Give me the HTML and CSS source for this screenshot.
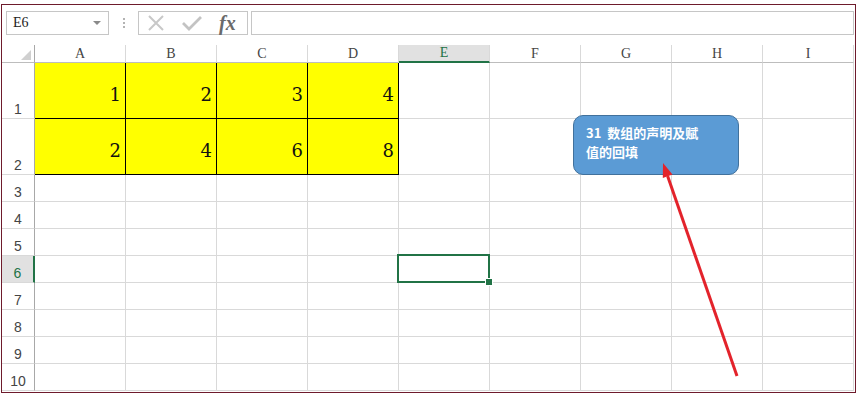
FILE: index.html
```html
<!DOCTYPE html>
<html lang="zh">

<head>
    <meta charset="UTF-8">
    <title>数组的声明及赋值的回填</title>
    <link rel="stylesheet" href="styles.css">
</head>

<body>
    <div class="window">
        <div class="formula-bar">
            <div class="name-box">
                <span>E6</span>
                <span class="caret"></span>
            </div>
            <div class="grip">
                <span></span><span></span><span></span>
            </div>
            <div class="fx-box">
                <svg class="icon-cancel" width="18" height="18" viewBox="0 0 18 18">
                    <path d="M2 2 L16 16 M16 2 L2 16" stroke="#c8c8c8" stroke-width="2" fill="none" />
                </svg>
                <svg class="icon-enter" width="20" height="16" viewBox="0 0 20 16">
                    <path d="M1 8 L7 14 L19 2" stroke="#c3c3c3" stroke-width="2.8" fill="none" />
                </svg>
                <span class="fx">fx</span>
            </div>
            <div class="formula-input"></div>
        </div>

        <div class="sheet">
            <!-- column headers -->
            <div class="hd corner"></div>
            <div class="hd">A</div>
            <div class="hd">B</div>
            <div class="hd">C</div>
            <div class="hd">D</div>
            <div class="hd active">E</div>
            <div class="hd">F</div>
            <div class="hd">G</div>
            <div class="hd">H</div>
            <div class="hd">I</div>

            <!-- row 1 -->
            <div class="rh">1</div>
            <div class="c y">1</div>
            <div class="c y">2</div>
            <div class="c y">3</div>
            <div class="c y">4</div>
            <div class="c"></div>
            <div class="c"></div>
            <div class="c"></div>
            <div class="c"></div>
            <div class="c"></div>

            <!-- row 2 -->
            <div class="rh">2</div>
            <div class="c y">2</div>
            <div class="c y">4</div>
            <div class="c y">6</div>
            <div class="c y">8</div>
            <div class="c"></div>
            <div class="c"></div>
            <div class="c"></div>
            <div class="c"></div>
            <div class="c"></div>

            <!-- row 3 -->
            <div class="rh">3</div>
            <div class="c"></div><div class="c"></div><div class="c"></div>
            <div class="c"></div><div class="c"></div><div class="c"></div>
            <div class="c"></div><div class="c"></div><div class="c"></div>

            <!-- row 4 -->
            <div class="rh">4</div>
            <div class="c"></div><div class="c"></div><div class="c"></div>
            <div class="c"></div><div class="c"></div><div class="c"></div>
            <div class="c"></div><div class="c"></div><div class="c"></div>

            <!-- row 5 -->
            <div class="rh">5</div>
            <div class="c"></div><div class="c"></div><div class="c"></div>
            <div class="c"></div><div class="c"></div><div class="c"></div>
            <div class="c"></div><div class="c"></div><div class="c"></div>

            <!-- row 6 -->
            <div class="rh active">6</div>
            <div class="c"></div><div class="c"></div><div class="c"></div>
            <div class="c"></div><div class="c sel"></div><div class="c"></div>
            <div class="c"></div><div class="c"></div><div class="c"></div>

            <!-- row 7 -->
            <div class="rh">7</div>
            <div class="c"></div><div class="c"></div><div class="c"></div>
            <div class="c"></div><div class="c"></div><div class="c"></div>
            <div class="c"></div><div class="c"></div><div class="c"></div>

            <!-- row 8 -->
            <div class="rh">8</div>
            <div class="c"></div><div class="c"></div><div class="c"></div>
            <div class="c"></div><div class="c"></div><div class="c"></div>
            <div class="c"></div><div class="c"></div><div class="c"></div>

            <!-- row 9 -->
            <div class="rh">9</div>
            <div class="c"></div><div class="c"></div><div class="c"></div>
            <div class="c"></div><div class="c"></div><div class="c"></div>
            <div class="c"></div><div class="c"></div><div class="c"></div>

            <!-- row 10 -->
            <div class="rh">10</div>
            <div class="c"></div><div class="c"></div><div class="c"></div>
            <div class="c"></div><div class="c"></div><div class="c"></div>
            <div class="c"></div><div class="c"></div><div class="c"></div>
        </div>

        <!-- annotation -->
        <div class="callout">31&nbsp; 数组的声明及赋<br>值的回填</div>
        <svg class="arrow" width="862" height="401" viewBox="0 0 862 401">
            <line x1="737" y1="376" x2="667.6" y2="176" stroke="#e3232b" stroke-width="3" />
            <polygon points="663,163 672.5,174.6 662.8,178" fill="#e3232b" />
        </svg>
    </div>
</body>

</html>
```

FILE: styles.css
```css
/* Reset */
* {
    margin: 0;
    padding: 0;
    box-sizing: border-box;
}

body {
    background: #fff;
    color: #222;
    font-family: "Liberation Sans", sans-serif;
}

/* Outer window frame */
.window {
    position: relative;
    margin: 4px 0 0 1px;
    width: 855px;
    height: 389px;
    border: 1px solid #6e1b2c;
    overflow: hidden;
    background: #fff;
}

/* Formula bar */
.formula-bar {
    display: flex;
    align-items: flex-start;
    height: 40px;
    padding: 6px 1px 0 4px;
}

.name-box {
    width: 103px;
    height: 24px;
    border: 1px solid #c6c6c6;
    display: flex;
    align-items: center;
    justify-content: space-between;
    padding: 0 7px 0 6px;
    font-family: "Liberation Serif", serif;
    font-size: 14px;
    color: #222;
}

.caret {
    width: 0;
    height: 0;
    border-left: 4px solid transparent;
    border-right: 4px solid transparent;
    border-top: 4px solid #8a8a8a;
}

.grip {
    width: 29px;
    height: 24px;
    display: flex;
    flex-direction: column;
    align-items: center;
    justify-content: center;
    gap: 2px;
}

.grip span {
    width: 2px;
    height: 2px;
    background: #b3b3b3;
}

.fx-box {
    width: 110px;
    height: 24px;
    border: 1px solid #c6c6c6;
    display: flex;
    align-items: center;
    padding-left: 8px;
}

.icon-enter {
    margin-left: 17px;
}

.fx {
    margin-left: 17px;
    font-family: "Liberation Serif", serif;
    font-style: italic;
    font-weight: bold;
    font-size: 20px;
    color: #6a6a6a;
    line-height: 1;
}

.formula-input {
    flex: 1;
    height: 24px;
    margin-left: 3px;
    border: 1px solid #c6c6c6;
}

/* Sheet grid */
.sheet {
    display: grid;
    grid-template-columns: 33px repeat(9, 91px);
    grid-template-rows: 18px 56px 56px repeat(8, 27px);
}

.hd {
    border-right: 1px solid #d9d9d9;
    border-bottom: 1px solid #bdbdbd;
    display: flex;
    align-items: center;
    justify-content: center;
    font-family: "Liberation Serif", serif;
    font-size: 14px;
    color: #444;
}

.hd.corner {
    position: relative;
    border-right-color: #a8a8a8;
}

.hd.corner::after {
    content: '';
    position: absolute;
    right: 3px;
    bottom: 2px;
    width: 0;
    height: 0;
    border-left: 10px solid transparent;
    border-bottom: 10px solid #d0d0d0;
}

.hd.active {
    background: #e1e1e1;
    border-bottom: 2px solid #217346;
    color: #217346;
}

.rh {
    border-right: 1px solid #a8a8a8;
    border-bottom: 1px solid #d9d9d9;
    display: flex;
    align-items: flex-end;
    justify-content: center;
    padding-bottom: 1px;
    font-size: 14px;
    color: #444;
}

.rh.active {
    background: #e1e1e1;
    border-right: 2px solid #217346;
    color: #217346;
}

.c {
    border-right: 1px solid #d9d9d9;
    border-bottom: 1px solid #d9d9d9;
}

/* Filled data cells */
.c.y {
    background: #ffff00;
    border-right-color: #000;
    border-bottom-color: #000;
    display: flex;
    align-items: center;
    justify-content: flex-end;
    padding: 7px 4px 0 0;
    font-family: "DejaVu Serif", serif;
    font-size: 18px;
    color: #111;
}

/* Active cell */
.c.sel {
    position: relative;
}

.c.sel::before {
    content: '';
    position: absolute;
    left: -2px;
    top: -2px;
    right: -1px;
    bottom: -1px;
    border: 2px solid #217346;
}

.c.sel::after {
    content: '';
    position: absolute;
    right: -4px;
    bottom: -4px;
    width: 6px;
    height: 6px;
    background: #217346;
    border: 1px solid #fff;
}

/* Annotation shape */
.callout {
    position: absolute;
    left: 571px;
    top: 110px;
    width: 166px;
    height: 60px;
    background: #5b9bd5;
    border: 1px solid #41719c;
    border-radius: 10px;
    padding: 7px 0 0 12px;
    color: #fff;
    font-family: "Noto Sans CJK SC", sans-serif;
    font-weight: bold;
    font-size: 13px;
    line-height: 19px;
}

.arrow {
    position: absolute;
    left: -2px;
    top: -5px;
    pointer-events: none;
}
```
